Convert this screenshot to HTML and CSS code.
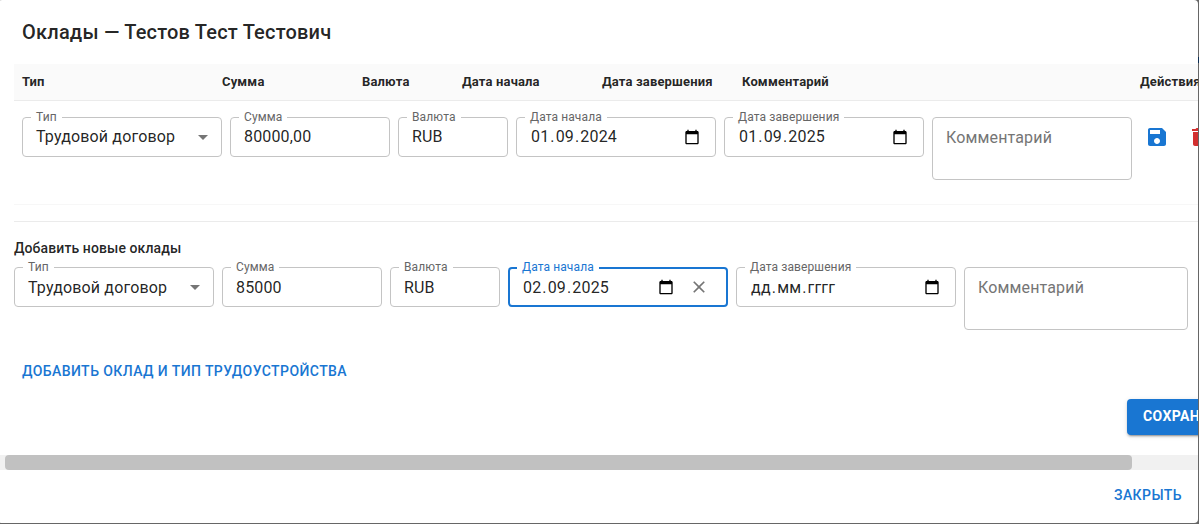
FILE: index.html
```html
<!DOCTYPE html>
<html lang="ru">
<head>
<meta charset="utf-8">
<title>Оклады</title>
<link rel="stylesheet" href="styles.css">
</head>
<body>
<div class="dialog">
  <h2 class="title">Оклады — Тестов Тест Тестович</h2>
  <div class="content">
    <div class="thead">
      <span>Тип</span><span>Сумма</span><span>Валюта</span><span>Дата начала</span><span>Дата завершения</span><span>Комментарий</span><span>Действия</span>
    </div>
    <div class="row saved">
      <div class="field w200"><fieldset><legend>Тип</legend></fieldset><span class="value">Трудовой договор</span><svg class="arrow" viewBox="0 0 24 24"><path d="M7 10l5 5 5-5z"/></svg></div>
      <div class="field w160"><fieldset><legend>Сумма</legend></fieldset><span class="value">80000,00</span></div>
      <div class="field w110"><fieldset><legend>Валюта</legend></fieldset><span class="value">RUB</span></div>
      <div class="field w200"><fieldset><legend>Дата начала</legend></fieldset><span class="value date"><i>01</i>.<i>09</i>.<i>2024</i></span><svg class="cal" viewBox="0 0 24 24"><path d="M20 3h-1V1h-2v2H7V1H5v2H4c-1.100 0-2 .9-2 2v16c0 1.100.9 2 2 2h16c1.100 0 2-.9 2-2V5c0-1.100-.9-2-2-2zm0 18H4V8h16v13z"/></svg></div>
      <div class="field w200"><fieldset><legend>Дата завершения</legend></fieldset><span class="value date"><i>01</i>.<i>09</i>.<i>2025</i></span><svg class="cal" viewBox="0 0 24 24"><path d="M20 3h-1V1h-2v2H7V1H5v2H4c-1.100 0-2 .9-2 2v16c0 1.100.9 2 2 2h16c1.100 0 2-.9 2-2V5c0-1.100-.9-2-2-2zm0 18H4V8h16v13z"/></svg></div>
      <div class="field area w200"><span class="placeholder">Комментарий</span></div>
      <div class="actions">
        <svg class="icon save-icon" viewBox="0 0 24 24"><path d="M17 3H5c-1.110 0-2 .9-2 2v14c0 1.100.89 2 2 2h14c1.100 0 2-.9 2-2V7l-4-4zm-5 16c-1.660 0-3-1.340-3-3s1.340-3 3-3 3 1.340 3 3-1.340 3-3 3zm3-10H5V5h10v4z"/></svg>
        <svg class="icon delete-icon" viewBox="0 0 24 24"><path d="M6 19c0 1.100.9 2 2 2h8c1.100 0 2-.9 2-2V7H6v12zM19 4h-3.500l-1-1h-5l-1 1H5v2h14V4z"/></svg>
      </div>
    </div>
    <hr class="divider">
    <h3 class="subtitle">Добавить новые оклады</h3>
    <div class="row">
      <div class="field w200"><fieldset><legend>Тип</legend></fieldset><span class="value">Трудовой договор</span><svg class="arrow" viewBox="0 0 24 24"><path d="M7 10l5 5 5-5z"/></svg></div>
      <div class="field w160"><fieldset><legend>Сумма</legend></fieldset><span class="value">85000</span></div>
      <div class="field w110"><fieldset><legend>Валюта</legend></fieldset><span class="value">RUB</span></div>
      <div class="field w220 focused"><fieldset><legend>Дата начала</legend></fieldset><span class="value date"><i>02</i>.<i>09</i>.<i>2025</i></span><svg class="cal" viewBox="0 0 24 24"><path d="M20 3h-1V1h-2v2H7V1H5v2H4c-1.100 0-2 .9-2 2v16c0 1.100.9 2 2 2h16c1.100 0 2-.9 2-2V5c0-1.100-.9-2-2-2zm0 18H4V8h16v13z"/></svg><svg class="clear" viewBox="0 0 24 24"><path d="M19 6.410L17.590 5 12 10.590 6.410 5 5 6.410 10.590 12 5 17.590 6.410 19 12 13.410 17.590 19 19 17.590 13.410 12z"/></svg></div>
      <div class="field w220"><fieldset><legend>Дата завершения</legend></fieldset><span class="value date"><i>дд</i>.<i>мм</i>.<i>гггг</i></span><svg class="cal" viewBox="0 0 24 24"><path d="M20 3h-1V1h-2v2H7V1H5v2H4c-1.100 0-2 .9-2 2v16c0 1.100.9 2 2 2h16c1.100 0 2-.9 2-2V5c0-1.100-.9-2-2-2zm0 18H4V8h16v13z"/></svg></div>
      <div class="field area w224"><span class="placeholder">Комментарий</span></div>
    </div>
    <div class="add-line"><span class="text-button">Добавить оклад и тип трудоустройства</span></div>
    <div class="save-line"><span class="save-button">Сохранить</span></div>
  </div>
  <div class="scrollbar"><div class="thumb"></div></div>
  <div class="footer"><span class="text-button">Закрыть</span></div>
</div>
</body>
</html>
```
FILE: styles.css
```css
* { box-sizing: border-box; }
body {
  margin: 0;
  height: 524px;
  overflow: hidden;
  background: linear-gradient(#0b2d52, #0b2d52) 1198px 57px / 1px 6px no-repeat #666;
  font-family: Roboto, "Liberation Sans", sans-serif;
  color: rgba(0, 0, 0, .87);
}
.dialog {
  width: 1200px;
  height: 523px;
  margin-left: -2px;
  padding-left: 2px;
  background: #fff;
  border-radius: 4px;
  overflow: hidden;
}
.title {
  margin: 0;
  height: 64px;
  padding: 16px 22px;
  font-size: 20px;
  line-height: 32px;
  font-weight: 500;
  letter-spacing: .2px;
}
.content { height: 391px; padding-left: 14px; overflow: hidden; }
.thead {
  display: grid;
  grid-template-columns: 200px 140px 100px 140px 140px 398px 120px;
  width: 1300px;
  height: 37px;
  padding-left: 8px;
  background: #fafafa;
  border-bottom: 1px solid #ebebeb;
  font-size: 13px;
  font-weight: 700;
  line-height: 36px;
  letter-spacing: .15px;
}
.row {
  display: flex;
  gap: 8px;
  width: 1300px;
  height: 63px;
}
.row.saved {
  height: 104px;
  padding: 16px 8px;
  border-bottom: 1px solid #f7f7f7;
}
.field {
  position: relative;
  display: flex;
  align-items: center;
  flex: none;
  height: 40px;
  padding: 0 14px;
  font-size: 16px;
  line-height: 23px;
  letter-spacing: .15px;
}
.field fieldset {
  position: absolute;
  inset: -5px 0 0;
  margin: 0;
  padding: 0 8px;
  min-width: 0;
  border: 1px solid #c4c4c4;
  border-radius: 4px;
}
.field legend {
  height: 11px;
  padding: 0 5px;
  font-size: 12px;
  line-height: 11px;
  letter-spacing: .11px;
  color: #666;
}
.saved .value { margin-top: -1px; }
.w110 { width: 110px; }
.w160 { width: 160px; }
.w200 { width: 200px; }
.w220 { width: 220px; }
.w224 { width: 224px; }
.date { flex: 1; }
.date i { padding: 0 1px; font-style: normal; }
.area {
  height: 63px;
  align-items: flex-start;
  padding: 8px 13px;
  border: 1px solid #c4c4c4;
  border-radius: 4px;
}
.placeholder { color: #757575; }
.arrow { width: 24px; height: 24px; margin: 0 -7px 0 auto; fill: #757575; }
.cal { width: 16px; height: 16px; margin-right: 2px; }
.clear { width: 20px; height: 20px; margin: 0 5px 0 13px; fill: #757575; }
.focused fieldset { border: 2px solid #1976d2; padding: 0 7px; }
.focused legend { color: #1976d2; }
.actions { display: flex; gap: 18px; padding: 8px 0 0 5px; }
.icon { width: 24px; height: 24px; }
.save-icon { fill: #1976d2; }
.delete-icon { fill: #d32f2f; }
.divider { margin: 16px 0 0; border: 0; border-top: 1px solid #ebebeb; }
.subtitle {
  margin: 0;
  padding-top: 15px;
  height: 45px;
  font-size: 14px;
  line-height: 22px;
  font-weight: 500;
  letter-spacing: .1px;
}
.text-button {
  font-size: 14px;
  font-weight: 500;
  line-height: 24px;
  letter-spacing: .42px;
  text-transform: uppercase;
  color: #1976d2;
}
.add-line { padding: 29px 8px 0; height: 69px; }
.save-line { display: flex; padding-left: 1113px; width: 1300px; }
.save-button {
  height: 36px;
  padding: 0 16px;
  border-radius: 4px;
  background: #1976d2;
  color: #fff;
  font-size: 14px;
  font-weight: 700;
  line-height: 35px;
  letter-spacing: .4px;
  text-transform: uppercase;
  box-shadow: 0 3px 1px -2px rgba(0,0,0,.2), 0 2px 2px rgba(0,0,0,.14), 0 1px 5px rgba(0,0,0,.12);
}
.scrollbar { height: 15px; padding-left: 5px; background: #f1f1f1; }
.thumb { width: 1127px; height: 15px; border-radius: 4px; background: #c1c1c1; }
.footer { padding: 13px 16px; text-align: right; }
```
